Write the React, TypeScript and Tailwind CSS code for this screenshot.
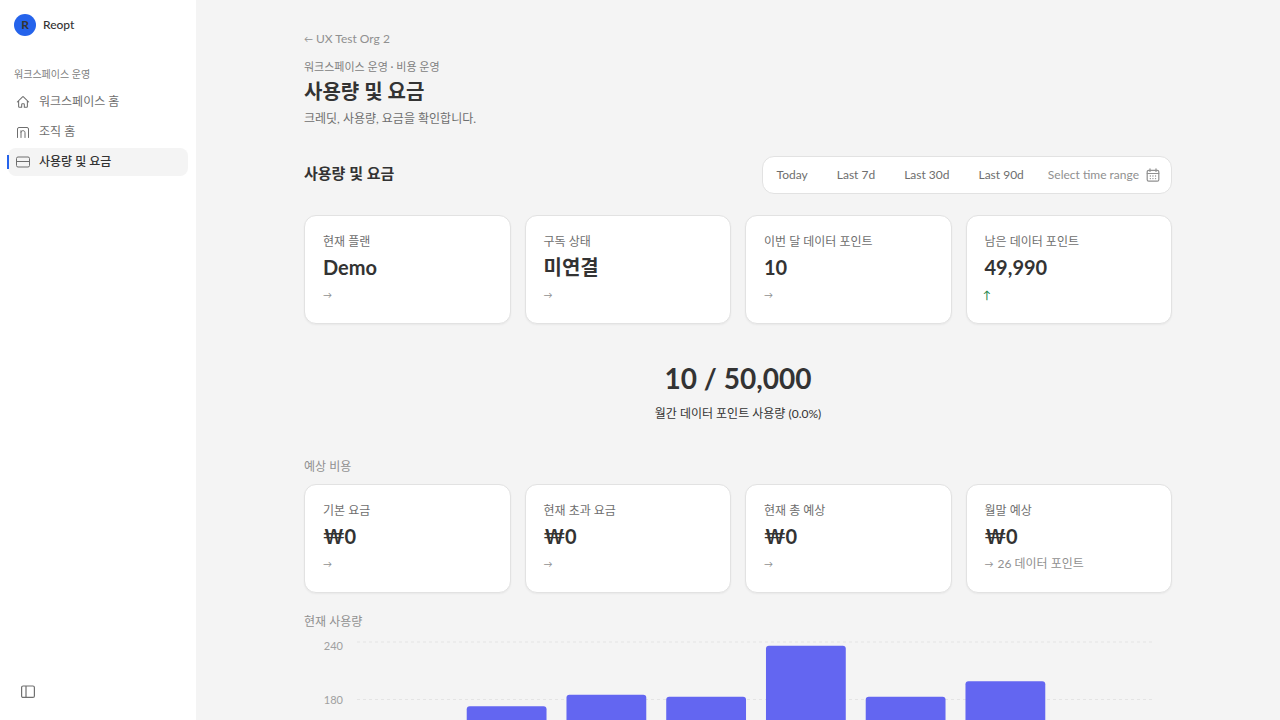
import React from "react";

const NAV = [
  { label: "워크스페이스 홈", icon: HomeIcon, active: false },
  { label: "조직 홈", icon: OrgIcon, active: false },
  { label: "사용량 및 요금", icon: CardIcon, active: true },
];

const RANGES = ["Today", "Last 7d", "Last 30d", "Last 90d"];

const USAGE = [
  { label: "현재 플랜", value: "Demo", trend: "→" },
  { label: "구독 상태", value: "미연결", trend: "→" },
  { label: "이번 달 데이터 포인트", value: "10", trend: "→" },
  { label: "남은 데이터 포인트", value: "49,990", trend: "↑" },
];

const COSTS = [
  { label: "기본 요금", value: "₩0", trend: "→" },
  { label: "현재 초과 요금", value: "₩0", trend: "→" },
  { label: "현재 총 예상", value: "₩0", trend: "→" },
  { label: "월말 예상", value: "₩0", trend: "→", note: "26 데이터 포인트" },
];

const BARS = [0, 173, 185, 183, 236, 183, 199, 0];
const TICKS = [240, 180, 120, 60, 0];
const PLOT_HEIGHT = 230;
const yOf = (v: number) => 3 + PLOT_HEIGHT * (1 - v / 240);

function HomeIcon() {
  return (
    <svg className="size-3.5" viewBox="0 0 24 24" fill="none" stroke="currentColor" strokeWidth="1.8" strokeLinecap="round" strokeLinejoin="round" aria-hidden="true">
      <path d="m2.25 12 8.954-8.955c.44-.439 1.152-.439 1.591 0L21.75 12M4.5 9.75v10.125c0 .621.504 1.125 1.125 1.125H9.75v-4.875c0-.621.504-1.125 1.125-1.125h2.25c.621 0 1.125.504 1.125 1.125V21h4.125c.621 0 1.125-.504 1.125-1.125V9.75" />
    </svg>
  );
}

function OrgIcon() {
  return (
    <svg className="size-3.5" viewBox="0 0 14 14" fill="none" stroke="currentColor" strokeWidth="1" strokeLinecap="round" strokeLinejoin="round" aria-hidden="true">
      <path d="M1.500 12.500v-8.500a1.500 1.500 0 0 1 1.500-1.500h8a1.500 1.500 0 0 1 1.500 1.500v8.500M5 12.500V5.700M5 7.200c.3-1 1-1.500 2-1.500 1.300 0 2 .8 2 2v4.800" />
    </svg>
  );
}

function CardIcon() {
  return (
    <svg className="size-4" viewBox="0 0 16 16" fill="none" stroke="currentColor" strokeWidth="1" strokeLinejoin="round" aria-hidden="true">
      <rect x="1.500" y="3" width="13" height="10" rx="1.500" />
      <path d="M1.500 7.500h13" />
    </svg>
  );
}

function CalendarIcon() {
  return (
    <svg className="size-3.5" viewBox="0 0 14 14" fill="none" stroke="currentColor" strokeWidth="1.200" strokeLinecap="round" aria-hidden="true">
      <rect x="1.200" y="2.300" width="11.600" height="10.900" rx="1.500" />
      <path d="M1.200 5.500h11.600M4 .8v2.700M10 .8v2.700" />
      <path d="M6.900 8h.1M9.500 8h.1M4.300 10.600h.1M6.900 10.600h.1M9.500 10.600h.1M4.300 8h.1" strokeWidth="1.300" />
    </svg>
  );
}

function PanelIcon() {
  return (
    <svg className="size-4" viewBox="0 0 16 16" fill="none" stroke="currentColor" strokeWidth="1.200" aria-hidden="true">
      <rect x="1.600" y="2" width="12.800" height="11.400" rx="1.500" />
      <path d="M6 2v11.400" />
    </svg>
  );
}

function StatCard({ label, value, trend, note }: { label: string; value: string; trend: string; note?: string }) {
  return (
    <article className="h-[109px] rounded-xl border border-[#e2e2e2] bg-white px-[18px] pt-[17px] shadow-xs">
      <h3 className="text-[12px] leading-[18px] text-[#6e6e6e]">{label}</h3>
      <p className="text-[20px] leading-8 font-bold text-[#333333]">{value}</p>
      <p className="mt-[3px] flex h-[18px] items-center gap-1 text-[12px] leading-[16px] text-[#909090]">
        <span className={trend === "↑" ? "-ml-0.5 text-[11px] font-medium text-[#23854a]" : "text-[9px]"}>{trend}</span>
        {note && <span>{note}</span>}
      </p>
    </article>
  );
}

function UsageChart() {
  return (
    <div className="flex h-[260px] pr-[17px]">
      <svg className="h-full w-[53px] shrink-0 overflow-visible" aria-hidden="true">
        {TICKS.map((t) => (
          <text key={t} x="39" y={t === 240 ? 11 : yOf(t) + 4} textAnchor="end" className="fill-[#a0a0a0] text-[11px]">
            {t}
          </text>
        ))}
      </svg>
      <svg className="h-full min-w-0 flex-1" role="img" aria-label="현재 사용량">
        {TICKS.map((t) => (
          <line key={t} x1="0" x2="100%" y1={yOf(t)} y2={yOf(t)} stroke="#e4e4e4" strokeDasharray="3 3" />
        ))}
        {BARS.map((v, i) => (
          <rect key={i} x={`${i * 12.5 + 1.25}%`} y={yOf(v)} width="10%" height={(PLOT_HEIGHT * v) / 240} rx="3" fill="#6366f1" />
        ))}
      </svg>
    </div>
  );
}

export default function App() {
  return (
    <div className="flex h-screen bg-[#f4f4f4] font-['Lato','Noto_Sans_CJK_KR',sans-serif] text-[#333333]">
      <aside className="flex w-[196px] shrink-0 flex-col bg-white">
        <div className="flex items-center gap-[7px] px-3.5 pt-3.5">
          <span className="flex size-[22px] items-center justify-center rounded-full bg-[#2563eb] text-[12px] font-bold">R</span>
          <span className="text-[12px] font-medium">Reopt</span>
        </div>
        <nav className="mt-[30px] flex flex-col px-2">
          <h2 className="mb-1.5 px-1.5 text-[10px] leading-4 text-[#808080]">워크스페이스 운영</h2>
          {NAV.map(({ label, icon: Icon, active }) => (
            <a
              key={label}
              href="#"
              aria-current={active ? "page" : undefined}
              className={
                active
                  ? "relative mb-0.5 flex h-7 items-center gap-2 rounded-lg bg-[#f4f4f4] px-[7px] text-[12px] font-medium text-[#333333]"
                  : "mb-0.5 flex h-7 items-center gap-2 rounded-lg px-[7px] text-[12px] text-[#6e6e6e]"
              }
            >
              {active && <span className="absolute top-[7px] -left-px h-3.5 w-0.5 bg-[#2563eb]" />}
              <span className="flex w-4 justify-center text-[#6e6e6e]">
                <Icon />
              </span>
              {label}
            </a>
          ))}
        </nav>
        <button type="button" aria-label="사이드바 접기" className="mt-auto mb-5 ml-5 flex size-4 items-center justify-center text-[#707070]">
          <PanelIcon />
        </button>
      </aside>

      <main className="min-w-0 flex-1 overflow-y-auto px-6 [scrollbar-width:none]">
        <div className="mx-auto w-full max-w-[868px] pt-[30px] pb-8">
          <a href="#" className="flex items-center gap-[3px] text-[12px] leading-[18px] text-[#909090]">
            <span className="text-[9px]">←</span>
            <span>UX Test Org 2</span>
          </a>
          <header className="mt-[11px]">
            <p className="text-[11px] leading-4 text-[#808080]">워크스페이스 운영 · 비용 운영</p>
            <h1 className="text-[20px] leading-8 font-semibold">사용량 및 요금</h1>
            <p className="mt-[3px] text-[12px] leading-[18px] text-[#6e6e6e]">크레딧, 사용량, 요금을 확인합니다.</p>
          </header>

          <div className="mt-7 flex items-start justify-between">
            <h2 className="mt-1.5 text-[15px] leading-[22px] font-semibold">사용량 및 요금</h2>
            <div className="flex h-[38px] items-center gap-px rounded-xl border border-[#e2e2e2] bg-white pr-[11px] text-[12px]">
              {RANGES.map((r) => (
                <button key={r} type="button" className="px-3.5 text-[#6e6e6e]">
                  {r}
                </button>
              ))}
              <button type="button" className="ml-[9px] flex items-center gap-[7px] text-[#909090]">
                Select time range
                <CalendarIcon />
              </button>
            </div>
          </div>

          <section className="mt-[21px] grid grid-cols-4 gap-3.5">
            {USAGE.map((s) => (
              <StatCard key={s.label} {...s} />
            ))}
          </section>

          <section className="mt-8 flex flex-col items-center">
            <p className="text-[28px] leading-[44px] font-bold">10 / 50,000</p>
            <p className="mt-[5px] text-[12px] leading-[18px]">월간 데이터 포인트 사용량 (0.0%)</p>
          </section>

          <section className="mt-[35px]">
            <h2 className="text-[12px] leading-[18px] text-[#909090]">예상 비용</h2>
            <div className="mt-2 grid grid-cols-4 gap-3.5">
              {COSTS.map((s) => (
                <StatCard key={s.label} {...s} />
              ))}
            </div>
          </section>

          <section className="mt-5">
            <h2 className="text-[12px] leading-[18px] text-[#909090]">현재 사용량</h2>
            <div className="mt-2">
              <UsageChart />
            </div>
          </section>
        </div>
      </main>
    </div>
  );
}
